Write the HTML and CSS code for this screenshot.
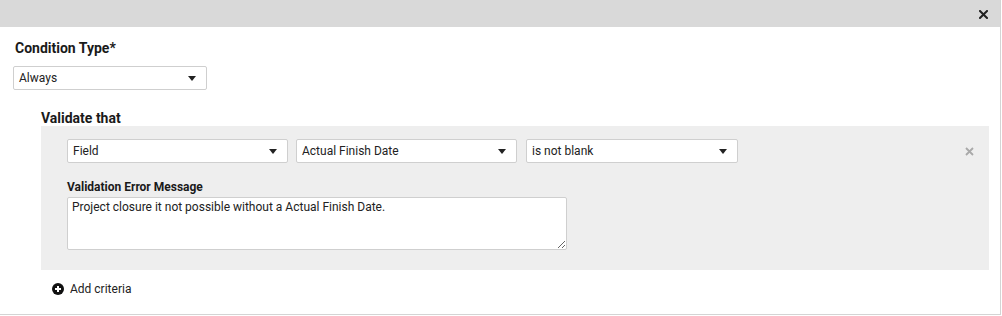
FILE: index.html
```html
<!DOCTYPE html>
<html lang="en">
<head>
    <meta charset="UTF-8">
    <meta name="viewport" content="width=device-width, initial-scale=1.0">
    <title>Validation Rule</title>
    <link rel="stylesheet" href="styles.css">
</head>
<body>
    <div class="dialog">
        <div class="dialog-header">
            <button class="close-btn" aria-label="Close">
                <svg width="9" height="9" viewBox="0 0 9 9"><path d="M1 1L8 8M8 1L1 8" stroke="#222" stroke-width="2" stroke-linecap="square"/></svg>
            </button>
        </div>

        <div class="dialog-body">
            <div class="field-label">Condition Type*</div>
            <div class="select select-type">
                <span>Always</span>
                <i class="caret"></i>
            </div>

            <div class="validate">
                <div class="field-label">Validate that</div>
                <div class="criteria-panel">
                    <div class="criteria-row">
                        <div class="select select-source"><span>Field</span><i class="caret"></i></div>
                        <div class="select select-field"><span>Actual Finish Date</span><i class="caret"></i></div>
                        <div class="select select-op"><span>is not blank</span><i class="caret"></i></div>
                        <button class="remove-btn" aria-label="Remove">
                            <svg width="9" height="9" viewBox="0 0 9 9"><path d="M1 1L8 8M8 1L1 8" stroke="#a9a9a9" stroke-width="1.8"/></svg>
                        </button>
                    </div>
                    <div class="small-label">Validation Error Message</div>
                    <textarea class="message">Project closure it not possible without a Actual Finish Date.</textarea>
                </div>
                <a class="add-criteria" href="#">
                    <svg width="12" height="12" viewBox="0 0 12 12"><circle cx="6" cy="6" r="6" fill="#111"/><path d="M6 3V9M3 6H9" stroke="#fff" stroke-width="2"/></svg>
                    <span>Add criteria</span>
                </a>
            </div>
        </div>
    </div>
</body>
</html>
```

FILE: styles.css
```css
* {
    margin: 0;
    padding: 0;
    box-sizing: border-box;
}

body {
    font-family: Roboto, 'Liberation Sans', Arial, sans-serif;
    color: #222;
    background: #fff;
}

.dialog {
    width: 1001px;
    height: 315px;
    border-right: 1px solid #d4d4d4;
    border-bottom: 1px solid #d4d4d4;
}

.dialog-header {
    height: 27px;
    background-color: #d9d9d9;
    display: flex;
    justify-content: flex-end;
    align-items: center;
    padding-right: 12px;
}

.close-btn,
.remove-btn {
    border: none;
    background: none;
    display: flex;
    cursor: pointer;
}

.close-btn {
    margin-top: 1px;
}

.dialog-body {
    padding: 12px 13px 0 13px;
}

.field-label {
    font-size: 14px;
    font-weight: 700;
    line-height: 18px;
    padding-left: 2px;
    color: #1a1a1a;
}

.select {
    height: 24px;
    background: #fff;
    border: 1px solid #cfcfcf;
    border-radius: 2px;
    display: flex;
    align-items: center;
    justify-content: space-between;
    padding: 0 10px 0 5px;
    font-size: 12px;
    color: #222;
}

.caret {
    width: 0;
    height: 0;
    border-left: 4px solid transparent;
    border-right: 4px solid transparent;
    border-top: 5px solid #222;
}

.select-type {
    width: 194px;
    margin-top: 9px;
}

.validate {
    margin-top: 18px;
    padding-left: 28px;
}

.validate > .field-label {
    padding: 3px 0 0 0;
    line-height: 15px;
}

.criteria-panel {
    width: 948px;
    background-color: #eeeeee;
    padding: 13px 15px 20px 26px;
}

.criteria-row {
    display: flex;
    align-items: center;
}

.select-source {
    width: 221px;
}

.select-field {
    width: 221px;
    margin-left: 8px;
}

.select-op {
    width: 212px;
    margin-left: 9px;
}

.remove-btn {
    margin-left: auto;
}

.small-label {
    font-size: 12px;
    font-weight: 700;
    line-height: 14px;
    margin-top: 17px;
    color: #1a1a1a;
}

.message {
    display: block;
    width: 500px;
    height: 53px;
    margin-top: 3px;
    border: 1px solid #cfcfcf;
    border-radius: 2px;
    padding: 2px 4px;
    font-family: Roboto, 'Liberation Sans', Arial, sans-serif;
    font-size: 12px;
    line-height: 15px;
    color: #222;
    resize: vertical;
}

.add-criteria {
    display: flex;
    align-items: center;
    gap: 6px;
    margin-top: 12px;
    margin-left: 11px;
    font-size: 12px;
    color: #222;
    text-decoration: none;
}
```
